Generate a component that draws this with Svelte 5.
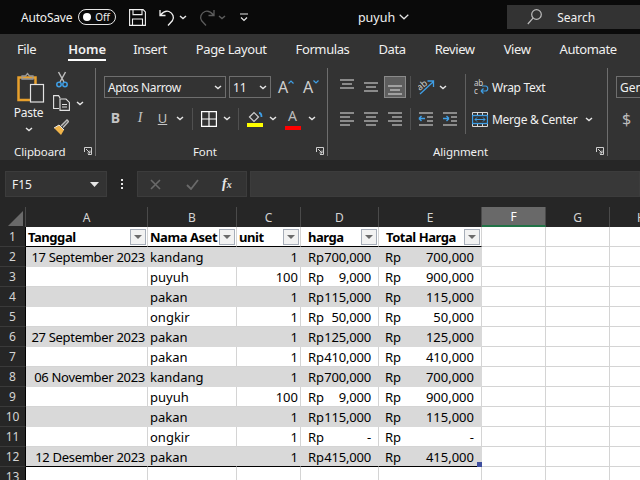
<script>
	const tabs = ['File', 'Home', 'Insert', 'Page Layout', 'Formulas', 'Data', 'Review', 'View', 'Automate'];
	const cols = ['A', 'B', 'C', 'D', 'E', 'F', 'G', 'H'];
	const heads = ['Tanggal', 'Nama Aset', 'unit', 'harga', 'Total Harga'];
	const rows = [
		['17 September 2023', 'kandang', '1', '700,000', '700,000'],
		['', 'puyuh', '100', '9,000', '900,000'],
		['', 'pakan', '1', '115,000', '115,000'],
		['', 'ongkir', '1', '50,000', '50,000'],
		['27 September 2023', 'pakan', '1', '125,000', '125,000'],
		['', 'pakan', '1', '410,000', '410,000'],
		['06 November 2023', 'kandang', '1', '700,000', '700,000'],
		['', 'puyuh', '100', '9,000', '900,000'],
		['', 'pakan', '1', '115,000', '115,000'],
		['', 'ongkir', '1', '-', '-'],
		['12 Desember 2023', 'pakan', '1', '415,000', '415,000']
	];
</script>

{#snippet chev(color = '#e6e6e6')}
	<svg class="chev" width="8" height="5" viewBox="0 0 8 5"><path d="M1 1l3 2.6L7 1" fill="none" stroke={color} stroke-width="1.4" /></svg>
{/snippet}

{#snippet lines(widths, shift = 0, arrow = '')}
	<svg width="16" height="16" viewBox="0 0 16 16">
		{#each widths as w, i}
			<rect x={w[0]} y={i * 4 + 0.5 + shift} width={w[1]} height="1" fill="#e4e4e4" />
		{/each}
		{#if arrow === 'left'}
			<path transform="translate(0 {shift})" d="M1 6.500h6M1 6.500l2.500-2.500M1 6.500l2.500 2.500" fill="none" stroke="#3f9fe6" stroke-width="1.4" />
		{:else if arrow === 'right'}
			<path transform="translate(0 {shift})" d="M1 6.500h6M7 6.500L4.500 4M7 6.500L4.500 9" fill="none" stroke="#3f9fe6" stroke-width="1.4" />
		{/if}
	</svg>
{/snippet}

{#snippet launcher()}
	<svg class="launch" width="8" height="8" viewBox="0 0 8 8"><path d="M.5 5V.5H7.500V7.500H4M2 2l4 4M6 3.500V6H3.500" fill="none" stroke="#cfcfcf" /></svg>
{/snippet}

<div class="window">
	<header class="titlebar">
		<span class="autosave">AutoSave</span>
		<span class="toggle"><i></i>Off</span>
		<svg class="save" width="17" height="17" viewBox="0 0 17 17" fill="none" stroke="#f2f2f2" stroke-width="1.100">
			<path d="M.6.6h13.500l2.300 2.300v13.500H.6zM4 .6v5h9v-5M3.500 16.400v-6.400h10v6.400" />
		</svg>
		<svg class="undo" width="17" height="17" viewBox="0 0 17 17" fill="none" stroke="#f2f2f2" stroke-width="1.300">
			<path d="M1 1v5.500h5.500M1.500 6C4 3 7 1.500 10 2.500c4 1.500 5.500 6 3.500 9L9 16.500" />
		</svg>
		{@render chev()}
		<svg class="redo" width="17" height="17" viewBox="0 0 17 17" fill="none" stroke="#5c5c5c" stroke-width="1.300">
			<path d="M16 1v5.500h-5.500M15.500 6C13 3 10 1.500 7 2.500 3 4 1.500 8.500 3.500 11.500L8 16.500" />
		</svg>
		{@render chev('#5c5c5c')}
		<svg class="more" width="8" height="9" viewBox="0 0 8 9" fill="none" stroke="#e6e6e6" stroke-width="1.200"><path d="M0 1h8M1 4.500l3 3 3-3" /></svg>
		<span class="docname">puyuh</span>
		<svg class="docchev" width="10" height="6" viewBox="0 0 10 6"><path d="M.7.7L5 4.800 9.300.7" fill="none" stroke="#e6e6e6" stroke-width="1.200" /></svg>
		<div class="search">
			<svg width="15" height="16" viewBox="0 0 15 16" fill="none" stroke="#bdbdbd" stroke-width="1.200"><circle cx="9.500" cy="5.500" r="4.800" /><path d="M6 9.200L.8 15" /></svg>
			<span>Search</span>
		</div>
	</header>

	<nav class="tabs">
		{#each tabs as tab}
			<span class="tab" class:active={tab === 'Home'}>{tab}</span>
		{/each}
	</nav>

	<section class="ribbon">
		<div class="group clipboard">
			<div class="body">
				<div class="paste">
					<svg width="28" height="31" viewBox="0 0 28 31" fill="none">
						<path d="M13 28H1.500V5.500h17V12" stroke="#e8a02c" stroke-width="2.500" />
						<path d="M5 7V4h3.500L10.500 1.500 12.500 4H16v3z" stroke="#9a9a9a" stroke-width="1.300" />
						<rect x="13.500" y="12.500" width="13" height="17.500" stroke="#e2e2e2" stroke-width="1.200" fill="#333" />
					</svg>
					<span>Paste</span>
					{@render chev()}
				</div>
				<div class="tools">
					<svg width="12" height="17" viewBox="0 0 12 17" fill="none">
						<path d="M2.500 1L8 11M9.500 1L4 11" stroke="#bcbcbc" stroke-width="1.500" />
						<circle cx="3" cy="13.500" r="2.200" stroke="#3f9fe6" stroke-width="1.500" />
						<circle cx="9" cy="13.500" r="2.200" stroke="#3f9fe6" stroke-width="1.500" />
					</svg>
					<div class="copy">
						<svg width="17" height="16" viewBox="0 0 17 16" fill="none" stroke="#e2e2e2" stroke-width="1.100">
							<path d="M6 13.500H.6V.6h5l1.500 2.500M7 15.400V4h6l3.400 3.400v8zM9 9.500h5M9 12h5" />
						</svg>
						{@render chev()}
					</div>
					<svg class="brush" width="16" height="16" viewBox="0 0 16 16" fill="none">
						<path d="M1 9l5-3 5 5-3 5z" fill="#f0b44a" />
						<path d="M1 9l5-3 5 5" stroke="#e8e8e8" />
						<path d="M8 7l6-6 1.500 1.500-5.500 6" stroke="#bcbcbc" stroke-width="1.500" />
					</svg>
				</div>
			</div>
			<div class="label"><span></span><span>Clipboard</span>{@render launcher()}</div>
		</div>

		<div class="group font">
			<div class="body">
				<div class="stack">
					<div class="font-top">
						<div class="select name"><span>Aptos Narrow</span>{@render chev()}</div>
						<div class="select size"><span>11</span>{@render chev()}</div>
						<span class="grow">A<svg width="6" height="4" viewBox="0 0 6 4"><path d="M.5 3.500L3 1l2.500 2.500" fill="none" stroke="#3f9fe6" stroke-width="1.200" /></svg></span>
						<span class="grow">A<svg width="6" height="4" viewBox="0 0 6 4"><path d="M.5.500L3 3 5.500.5" fill="none" stroke="#3f9fe6" stroke-width="1.200" /></svg></span>
					</div>
					<div class="font-bottom">
						<b class="fmt">B</b>
						<i class="fmt">I</i>
						<span class="fmt under">U</span>
						{@render chev()}
						<span class="sep"></span>
						<svg width="16" height="16" viewBox="0 0 16 16" fill="none" stroke="#fff" stroke-width="1.200"><path d="M.6.6h14.800v14.800H.6zM8 .6v14.800M.6 8h14.800" /></svg>
						{@render chev()}
						<span class="sep"></span>
						<svg width="16" height="17" viewBox="0 0 16 17" fill="none">
							<path d="M2.500 7L7 2.500 11.500 7 7 11.500z" stroke="#d0d0d0" stroke-width="1.200" />
							<path d="M12 3c2 0 2.500 2 2.500 4" stroke="#3f9fe6" stroke-width="1.800" />
							<rect y="13" width="16" height="4" fill="#ffff00" />
						</svg>
						{@render chev()}
						<span class="color-a">A</span>
						{@render chev()}
					</div>
				</div>
			</div>
			<div class="label"><span></span><span>Font</span>{@render launcher()}</div>
		</div>

		<div class="group align">
			<div class="body">
				<div class="align-grid">
					{@render lines([[1, 14], [3, 10], [1, 14]], 0)}
					{@render lines([[1, 14], [3, 10], [1, 14]], 3)}
					<span class="pressed">{@render lines([[1, 14], [3, 10], [1, 14]], 6)}</span>
					<span class="sep"></span>
					<svg width="17" height="16" viewBox="0 0 17 16" fill="none">
						<text x="0" y="9" fill="#cfcfcf" font-size="9" font-family="Noto Sans" transform="rotate(-40 5 8)">ab</text>
						<path d="M2 15L15 3M9.500 2H15.500V8" stroke="#3f9fe6" stroke-width="1.300" />
					</svg>
					<span class="left">{@render chev()}</span>
					<span class="sep tall"></span>
					<div class="wrapline">
						<svg class="wrapicon" width="15" height="16" viewBox="0 0 15 16" fill="none">
							<text x="0" y="7" fill="#cfcfcf" font-size="8" font-family="Noto Sans">ab</text>
							<text x="0" y="15" fill="#cfcfcf" font-size="8" font-family="Noto Sans">c</text>
							<path d="M7 12h4.500c3 0 3-5 0-5H8M7 12l2.500-2.500M7 12l2.500 2.500" stroke="#3f9fe6" stroke-width="1.200" />
						</svg>
						<span>Wrap Text</span>
					</div>
					{@render lines([[1, 14], [1, 10], [1, 14], [1, 10]], 1)}
					{@render lines([[1, 14], [3, 10], [1, 14], [3, 10]], 1)}
					{@render lines([[1, 14], [5, 10], [1, 14], [5, 10]], 1)}
					<span class="sep"></span>
					{@render lines([[1, 14], [9, 6], [9, 6], [1, 14]], 1, 'left')}
					{@render lines([[1, 14], [9, 6], [9, 6], [1, 14]], 1, 'right')}
					<div class="wrapline merge">
						<svg class="wrapicon" width="16" height="15" viewBox="0 0 16 15" fill="none">
							<path d="M.5.500h15v14H.5zM5.500.5v3M10.500.5v3M5.500 11.500v3M10.500 11.500v3" stroke="#d8d8d8" />
							<rect x=".5" y="3.500" width="15" height="8" stroke="#3f9fe6" stroke-width="1.300" />
							<path d="M3 7.500h10M3 7.500l2-2M3 7.500l2 2M13 7.500l-2-2M13 7.500l-2 2" stroke="#3f9fe6" />
						</svg>
						<span>Merge &amp; Center</span>
						{@render chev()}
					</div>
				</div>
			</div>
			<div class="label"><span></span><span>Alignment</span>{@render launcher()}</div>
		</div>

		<div class="group number">
			<div class="select gen"><span>General</span></div>
			<span class="dollar">$</span>
		</div>
	</section>

	<div class="formula">
		<div class="namebox"><span>F15</span><svg width="9" height="5" viewBox="0 0 9 5"><path d="M0 0h9L4.500 5z" fill="#e6e6e6" /></svg></div>
		<span class="dots"><i></i><i></i><i></i></span>
		<div class="fxbox">
			<svg width="11" height="11" viewBox="0 0 11 11"><path d="M1 1l9 9M10 1l-9 9" stroke="#6a6a6a" stroke-width="1.600" /></svg>
			<svg width="13" height="11" viewBox="0 0 13 11"><path d="M1 6l4 4 7-9" fill="none" stroke="#6a6a6a" stroke-width="1.800" /></svg>
			<span class="fx">f<small>x</small></span>
		</div>
		<div class="input"></div>
	</div>

	<div class="sheet">
		<div class="colhead corner"><svg width="15" height="15" viewBox="0 0 15 15"><path d="M15 0v15H0z" fill="#6a6a6a" /></svg></div>
		{#each cols as c}
			<div class="colhead" class:sel={c === 'F'}>{c}</div>
		{/each}

		<div class="rowhead">1</div>
		{#each heads as h, i}
			<div class="cell th" class:inset={i > 2}>
				<span>{h}</span>
				<span class="filter"><svg width="8" height="4" viewBox="0 0 8 4"><path d="M0 0h8L4 4z" fill="#6b6b6b" /></svg></span>
			</div>
		{/each}
		<div class="cell"></div>
		<div class="cell"></div>
		<div class="cell"></div>

		{#each rows as row, i}
			<div class="rowhead">{i + 2}</div>
			<div class="cell right date" class:band={i % 2 === 0} class:last={i === 10}>{row[0]}</div>
			<div class="cell" class:band={i % 2 === 0} class:last={i === 10}>{row[1]}</div>
			<div class="cell right" class:band={i % 2 === 0} class:last={i === 10}>{row[2]}</div>
			<div class="cell money d" class:band={i % 2 === 0} class:last={i === 10}><span>Rp</span><span>{row[3]}</span></div>
			<div class="cell money e" class:band={i % 2 === 0} class:last={i === 10}><span>Rp</span><span>{row[4]}</span></div>
			<div class="cell"></div>
			<div class="cell"></div>
			<div class="cell"></div>
		{/each}

		<div class="rowhead">13</div>
		{#each cols as c}
			<div class="cell"></div>
		{/each}
		<span class="handle"></span>
	</div>
</div>

<style>
	:global(body) {
		margin: 0;
		overflow: hidden;
	}

	.window {
		width: 640px;
		height: 480px;
		overflow: hidden;
		background: #262626;
		color: #f0f0f0;
		font-family: 'Noto Sans', sans-serif;
		font-size: 12px;
	}

	svg {
		display: block;
		flex: none;
	}

	.titlebar {
		display: flex;
		align-items: center;
		height: 34px;
		padding-left: 21px;
		background: #0a0a0a;
	}

	.autosave {
		width: 57px;
		font-size: 12px;
		letter-spacing: -0.2px;
	}

	.toggle {
		display: flex;
		align-items: center;
		justify-content: space-between;
		box-sizing: border-box;
		width: 38px;
		height: 16px;
		padding: 0 5px 0 4px;
		border: 1px solid #e6e6e6;
		border-radius: 8px;
		font-size: 10px;
	}

	.toggle i {
		width: 8px;
		height: 8px;
		border-radius: 50%;
		background: #fff;
	}

	.save {
		margin-left: 13px;
	}

	.undo {
		margin-left: 13px;
	}

	.titlebar .chev {
		margin-left: 3px;
	}

	.redo {
		margin-left: 11px;
	}

	.more {
		margin-left: 14px;
	}

	.docname {
		margin-left: 110px;
		font-size: 12.500px;
	}

	.docchev {
		margin-left: 4px;
	}

	.search {
		display: flex;
		align-items: center;
		gap: 15px;
		box-sizing: border-box;
		width: 133px;
		height: 24px;
		margin-left: 98px;
		padding-left: 20px;
		background: #333;
		font-size: 12px;
	}

	.tabs {
		display: flex;
		height: 28px;
		padding-left: 17px;
		background: #333;
		font-size: 13px;
	}

	.tab {
		box-sizing: border-box;
		height: 27px;
		padding-top: 6px;
		margin-right: 29px;
		letter-spacing: -0.4px;
		white-space: nowrap;
	}

	.tab:first-child {
		margin-right: 32px;
	}

	.tab.active {
		margin-right: 27px;
		letter-spacing: 0;
		font-weight: 600;
		border-bottom: 2px solid #fff;
	}

	.ribbon {
		display: flex;
		height: 98px;
		background: #333;
	}

	.group {
		display: flex;
		flex-direction: column;
		box-sizing: border-box;
		height: 88px;
		margin-top: 6px;
		border-right: 1px solid #6e6e6e;
	}

	.body {
		flex: 1;
		padding-top: 8px;
	}

	.label {
		display: grid;
		grid-template-columns: 1fr auto 1fr;
		align-items: center;
		height: 18px;
		margin-bottom: -4px;
		padding-right: 3px;
		font-size: 11.500px;
		letter-spacing: -0.1px;
	}

	.launch {
		justify-self: end;
	}

	.clipboard {
		width: 96px;
	}

	.clipboard .body {
		display: flex;
		padding-top: 4px;
	}

	.clipboard .label {
		grid-template-columns: 14px auto 1fr;
	}

	.paste {
		display: flex;
		flex-direction: column;
		align-items: center;
		width: 41px;
		margin-left: 10px;
	}

	.paste span {
		margin: 1px 4px 0 0;
		font-size: 12px;
		letter-spacing: -0.3px;
	}

	.paste .chev {
		margin: 6px 4px 0 0;
	}

	.tools {
		display: flex;
		flex-direction: column;
		margin: -1px 0 0 2px;
	}

	.tools > svg:first-child {
		margin-left: 3px;
	}

	.copy {
		display: flex;
		align-items: center;
		gap: 6px;
		margin-top: 7px;
	}

	.brush {
		margin-top: 8px;
	}

	.font {
		width: 232px;
		padding-left: 8px;
	}

	.font .label {
		grid-template-columns: 89px auto 1fr;
	}

	.font-top {
		display: flex;
		align-items: center;
		height: 22px;
	}

	.select {
		display: flex;
		align-items: center;
		justify-content: space-between;
		box-sizing: border-box;
		height: 22px;
		padding: 0 3px;
		border: 1px solid #6e6e6e;
	}

	.name {
		width: 122px;
		letter-spacing: -0.4px;
	}

	.size {
		width: 42px;
		margin-left: 3px;
	}

	.grow {
		display: flex;
		box-sizing: border-box;
		width: 25px;
		padding-left: 7px;
		color: #cfcfcf;
		font-size: 16px;
		line-height: 20px;
	}

	.grow svg {
		margin-top: 3px;
	}

	.font-bottom {
		display: grid;
		grid-template-columns: 23px 26px 19px 16px 9px 23px 14px 9px 23px 14px 25px 13px;
		align-items: center;
		justify-items: center;
		height: 23px;
		margin-top: 9px;
	}

	.fmt {
		margin-bottom: 2px;
		color: #c4c4c4;
		font-size: 14px;
		line-height: 18px;
	}

	i.fmt {
		font-family: 'Liberation Serif', serif;
	}

	.under {
		text-decoration: underline;
		font-size: 13px;
	}

	.sep {
		display: block;
		width: 1px;
		height: 22px;
		background: #505050;
	}

	.color-a {
		width: 16px;
		height: 18px;
		border-bottom: 4px solid #f00;
		color: #bcbcbc;
		font-size: 14px;
		line-height: 16px;
		text-align: center;
	}

	.align {
		width: 280px;
		padding-left: 7px;
	}

	.align .label {
		grid-template-columns: 98px auto 1fr;
	}

	.align-grid {
		display: grid;
		grid-template-columns: 24px 24px 24px 6px 26px 22px 8px 1fr;
		grid-template-rows: 22px 24px;
		row-gap: 9px;
		align-items: center;
		justify-items: center;
	}

	.pressed {
		display: flex;
		align-items: center;
		justify-content: center;
		box-sizing: border-box;
		width: 22px;
		height: 22px;
		background: #5e5e5e;
		border: 1px solid #8a8a8a;
	}

	.left {
		justify-self: start;
	}

	.tall {
		grid-row: 1 / 3;
		grid-column: 7;
		height: 60px;
		background: #606060;
	}

	.wrapline {
		display: flex;
		align-items: center;
		justify-self: stretch;
		letter-spacing: -0.3px;
	}

	.wrapicon {
		margin: 0 4px 0 3px;
	}

	.wrapline:not(.merge) .wrapicon {
		margin-left: 5px;
		margin-right: 3px;
	}

	.merge .chev {
		margin-left: 8px;
	}

	.number {
		flex: 1;
		padding: 8px 0 0 8px;
		border: 0;
		overflow: hidden;
	}

	.gen {
		width: 60px;
	}

	.dollar {
		margin: 10px 0 0 6px;
		color: #bcbcbc;
		font-size: 16px;
	}

	.formula {
		display: flex;
		align-items: stretch;
		height: 26px;
		padding: 11px 0 10px 5px;
		background: #262626;
	}

	.namebox {
		display: flex;
		align-items: center;
		justify-content: space-between;
		box-sizing: border-box;
		width: 102px;
		padding: 0 7px 0 6px;
		background: #333;
		border: 1px solid #3c3c3c;
		font-size: 12px;
	}

	.dots {
		display: flex;
		flex-direction: column;
		align-items: center;
		justify-content: center;
		gap: 2px;
		width: 30px;
	}

	.dots i {
		width: 2px;
		height: 2px;
		background: #e6e6e6;
	}

	.fxbox {
		display: flex;
		align-items: center;
		gap: 25px;
		box-sizing: border-box;
		width: 110px;
		padding-left: 12px;
		background: #333;
		border: 1px solid #3c3c3c;
	}

	.fx {
		margin-left: -2px;
		color: #e6e6e6;
		font-family: 'Liberation Serif', serif;
		font-style: italic;
		font-weight: 700;
		font-size: 14px;
	}

	.fx small {
		font-size: 10px;
	}

	.input {
		flex: 1;
		margin-left: 3px;
		background: #383838;
		border: 1px solid #3c3c3c;
	}

	.sheet {
		position: relative;
		display: grid;
		grid-template-columns: 26px 122px 89px 64px 78px 103px 64px 64px 64px;
		grid-auto-rows: 20px;
		background: #fff;
		color: #000;
		font-size: 13px;
	}

	.colhead,
	.rowhead {
		display: flex;
		align-items: center;
		justify-content: center;
		box-sizing: border-box;
		background: #262626;
		color: #d4d4d4;
		font-size: 12px;
	}

	.colhead {
		border-right: 1px solid #4a4a4a;
	}

	.colhead.corner {
		align-items: flex-end;
		justify-content: flex-end;
		padding: 0 2px 1px 0;
	}

	.colhead.sel {
		background: #696969;
		border-bottom: 2px solid #217346;
		color: #fff;
	}

	.rowhead {
		border-right: 1px solid #000;
		border-bottom: 1px solid #3a3a3a;
	}

	.cell {
		display: flex;
		align-items: center;
		box-sizing: border-box;
		padding: 0 2px;
		border-right: 1px solid #d4d4d4;
		border-bottom: 1px solid #d4d4d4;
		white-space: nowrap;
		overflow: hidden;
	}

	.th {
		justify-content: space-between;
		padding: 0 0 0 2px;
		border-bottom-color: #000;
		font-weight: 700;
		letter-spacing: -0.45px;
	}

	.th.inset {
		padding-left: 7px;
	}

	.filter {
		display: flex;
		align-items: center;
		justify-content: center;
		box-sizing: border-box;
		width: 16px;
		height: 16px;
		margin: 0 1px 0 -16px;
		background: #f2f2f2;
		border: 1px solid #a7aeb9;
	}

	.right {
		justify-content: flex-end;
	}

	.date {
		letter-spacing: -0.3px;
	}

	.band {
		background: #d9d9d9;
		border-color: #d9d9d9;
	}

	.last {
		border-bottom-color: #000;
	}

	.money {
		justify-content: space-between;
	}

	.money.d {
		padding: 0 7px 0 7px;
		letter-spacing: -0.2px;
	}

	.money.e {
		padding: 0 7px 0 6px;
	}

	.handle {
		position: absolute;
		top: 255px;
		left: 477px;
		width: 5px;
		height: 5px;
		background: #3f4f9f;
	}
</style>
